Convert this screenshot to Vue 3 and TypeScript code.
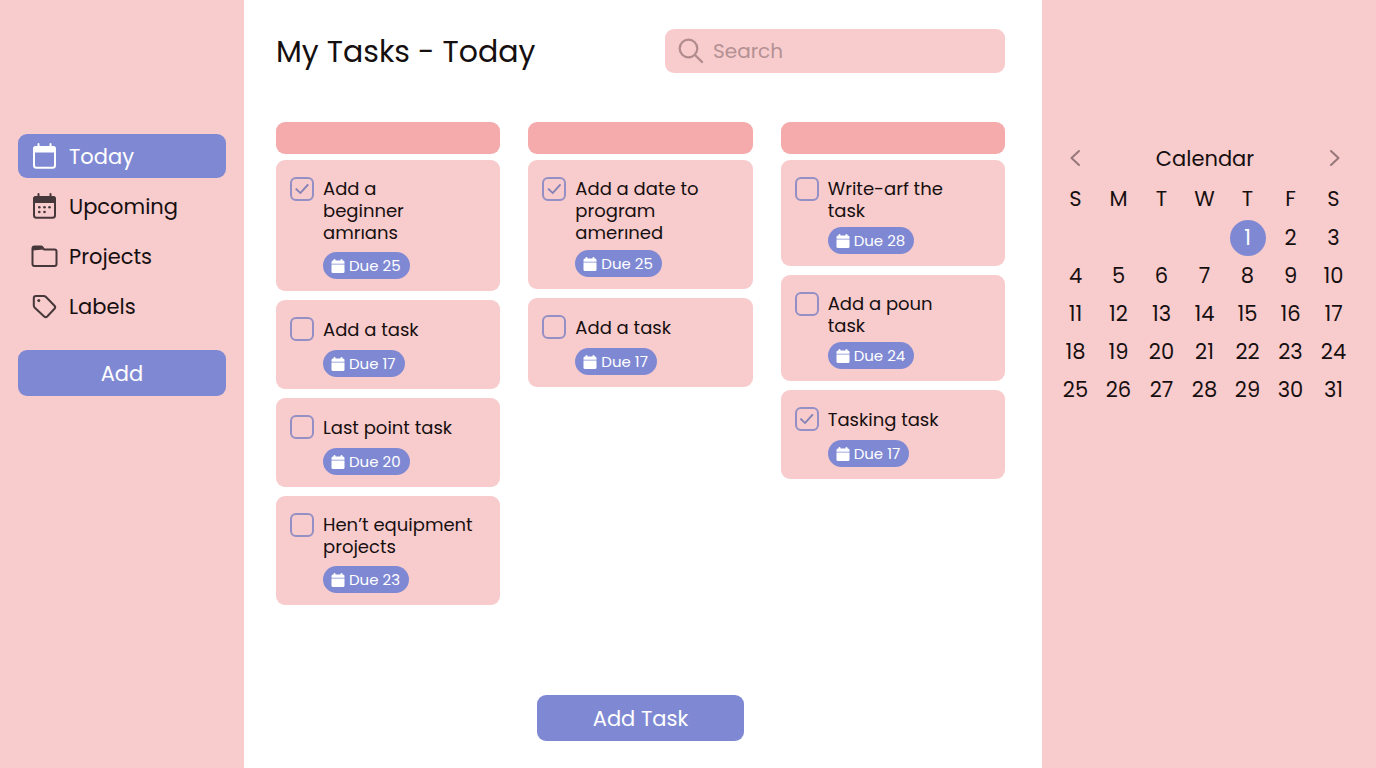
<script setup lang="ts">
import { ref } from 'vue'

interface Task {
  id: string
  title: string
  due: number
  done: boolean
  spacing?: 'snug' | 'tight'
}

type IconName = 'today' | 'upcoming' | 'projects' | 'labels'

const nav: { label: string; icon: IconName }[] = [
  { label: 'Today', icon: 'today' },
  { label: 'Upcoming', icon: 'upcoming' },
  { label: 'Projects', icon: 'projects' },
  { label: 'Labels', icon: 'labels' },
]
const active = ref<IconName>('today')
const query = ref('')

const columns = ref<Task[][]>([
  [
    { id: 'a1', title: 'Add a\nbeginner\namrıans', due: 25, done: true },
    { id: 'a2', title: 'Add a task', due: 17, done: false },
    { id: 'a3', title: 'Last point task', due: 20, done: false },
    { id: 'a4', title: 'Hen’t equipment\nprojects', due: 23, done: false },
  ],
  [
    { id: 'b1', title: 'Add a date to\nprogram\namerıned', due: 25, done: true, spacing: 'snug' },
    { id: 'b2', title: 'Add a task', due: 17, done: false },
  ],
  [
    { id: 'c1', title: 'Write-arf the\ntask', due: 28, done: false, spacing: 'tight' },
    { id: 'c2', title: 'Add a poun\ntask', due: 24, done: false, spacing: 'tight' },
    { id: 'c3', title: 'Tasking task', due: 17, done: true },
  ],
])

const weekdays = ['S', 'M', 'T', 'W', 'T', 'F', 'S']
const firstWeekday = 4
const selectedDay = ref(1)
const weeks: (number | null)[][] = Array.from({ length: 5 }, (_, w) =>
  Array.from({ length: 7 }, (_, d) => {
    const day = w * 7 + d - firstWeekday + 1
    return day >= 1 && day <= 31 ? day : null
  }),
)
</script>

<template>
  <div class="app">
    <aside class="sidebar">
      <nav class="nav">
        <a
          v-for="item in nav"
          :key="item.icon"
          href="#"
          class="nav-item"
          :class="{ active: active === item.icon }"
          @click.prevent="active = item.icon"
        >
          <svg v-if="item.icon === 'today'" class="nav-icon" viewBox="0 0 28 28" aria-hidden="true">
            <rect x="4" y="5" width="21" height="20.8" rx="2.5" fill="none" stroke="currentColor" stroke-width="2" />
            <path d="M3 10.5V7A3 3 0 0 1 6 4H23A3 3 0 0 1 26 7V10.5Z" fill="currentColor" />
            <path d="M8.500 2V5M20.500 2V5" stroke="currentColor" stroke-width="2" stroke-linecap="round" />
          </svg>
          <svg v-else-if="item.icon === 'upcoming'" class="nav-icon" viewBox="0 0 28 28" aria-hidden="true">
            <rect x="4" y="5" width="21" height="20.8" rx="2.5" fill="none" stroke="currentColor" stroke-width="2" />
            <path d="M3 11V7A3 3 0 0 1 6 4H23A3 3 0 0 1 26 7V11Z" fill="currentColor" />
            <path d="M8.500 2V5M20.500 2V5" stroke="currentColor" stroke-width="2" stroke-linecap="round" />
            <g fill="currentColor">
              <circle cx="9.300" cy="15.300" r="1.300" /><circle cx="14.500" cy="15.300" r="1.300" /><circle cx="19.500" cy="15.300" r="1.300" />
              <circle cx="9.300" cy="20" r="1.300" /><circle cx="14.500" cy="20" r="1.300" />
            </g>
          </svg>
          <svg v-else-if="item.icon === 'projects'" class="nav-icon" viewBox="0 0 28 28" aria-hidden="true">
            <path d="M2.500 8V22A2 2 0 0 0 4.500 24H24.500A2 2 0 0 0 26.500 22V9.500A2 2 0 0 0 24.500 7.500H14L12.500 5.300A2 2 0 0 0 11 4.500H4.500A2 2 0 0 0 2.500 6.500Z" fill="none" stroke="currentColor" stroke-width="2" stroke-linejoin="round" />
            <path d="M2.500 8.500V6.500A2 2 0 0 1 4.500 4.500H11L13.500 7.500Z" fill="currentColor" />
          </svg>
          <svg v-else class="nav-icon" viewBox="0 0 28 28" aria-hidden="true">
            <path d="M6 4H13.5Q15 4 16 5L24.500 13.800Q25.900 15.300 24.500 16.800L17.200 24.500Q15.700 26 14.200 24.600L4.800 15.800Q3.800 14.800 3.800 13.500V6.200Q3.800 4 6 4Z" fill="none" stroke="currentColor" stroke-width="2" stroke-linejoin="round" />
            <circle cx="8.800" cy="8.500" r="1.500" fill="currentColor" />
          </svg>
          <span>{{ item.label }}</span>
        </a>
      </nav>
      <button type="button" class="button">Add</button>
    </aside>

    <main class="main">
      <header class="header">
        <h1>My Tasks - Today</h1>
        <label class="search">
          <svg viewBox="0 0 26 26" aria-hidden="true">
            <circle cx="10.500" cy="10.500" r="8.800" fill="none" stroke="currentColor" stroke-width="2.200" />
            <path d="M17 17L24 24" stroke="currentColor" stroke-width="2.400" stroke-linecap="round" />
          </svg>
          <input v-model="query" type="search" placeholder="Search" aria-label="Search" />
        </label>
      </header>

      <div class="board">
        <section v-for="(column, c) in columns" :key="c" class="column">
          <div class="column-head"></div>
          <ul class="cards">
            <li v-for="task in column" :key="task.id" class="card">
              <input :id="task.id" v-model="task.done" type="checkbox" class="check" />
              <div class="card-body" :class="task.spacing">
                <label :for="task.id" class="card-title">{{ task.title }}</label>
                <span class="due">
                  <svg viewBox="0 0 14 16" aria-hidden="true">
                    <path d="M0.500 5.800V4Q0.500 2.500 2 2.500H2.500V2Q2.500 1 3.500 1T4.500 2V2.500H9.500V2Q9.500 1 10.500 1T11.500 2V2.500H12Q13.500 2.500 13.500 4V5.800Z" />
                    <path d="M0.500 6.500H13.500V13.500Q13.500 15 12 15H2Q0.500 15 0.500 13.500Z" />
                  </svg>
                  Due {{ task.due }}
                </span>
              </div>
            </li>
          </ul>
        </section>
      </div>

      <button type="button" class="button add-task">Add Task</button>
    </main>

    <aside class="calendar">
      <div class="calendar-head">
        <button type="button" aria-label="Previous month">
          <svg viewBox="0 0 12 18" aria-hidden="true"><path d="M10 2L2.500 9L10 16" /></svg>
        </button>
        <h2>Calendar</h2>
        <button type="button" aria-label="Next month">
          <svg viewBox="0 0 12 18" aria-hidden="true"><path d="M2 2L9.500 9L2 16" /></svg>
        </button>
      </div>
      <table>
        <thead>
          <tr>
            <th v-for="(name, i) in weekdays" :key="i" scope="col">{{ name }}</th>
          </tr>
        </thead>
        <tbody>
          <tr v-for="(week, w) in weeks" :key="w">
            <td v-for="(day, d) in week" :key="d">
              <button
                v-if="day !== null"
                type="button"
                class="day"
                :class="{ selected: day === selectedDay }"
                @click="selectedDay = day"
              >{{ day }}</button>
            </td>
          </tr>
        </tbody>
      </table>
    </aside>
  </div>
</template>

<style>
body {
  margin: 0;
}
</style>

<style scoped>
.app {
  --pink: #f8cbcc;
  --rose: #f5abac;
  --blue: #7f89d3;
  --ink: #160f10;
  display: flex;
  min-height: 100vh;
  background: #fff;
  color: var(--ink);
  font-family: Poppins, Inter, 'Liberation Sans', sans-serif;
}

.app *,
.app {
  box-sizing: border-box;
}

button,
input {
  font: inherit;
  color: inherit;
}

button {
  border: 0;
  padding: 0;
  background: none;
  cursor: pointer;
}

.sidebar {
  flex: 0 0 244px;
  padding: 134px 18px 24px;
  background: var(--pink);
}

.nav {
  display: flex;
  flex-direction: column;
  gap: 6px;
  margin-bottom: 22px;
}

.nav-item {
  display: flex;
  align-items: center;
  gap: 11px;
  height: 44px;
  padding: 0 12px;
  border-radius: 9px;
  color: var(--ink);
  font-size: 21px;
  text-decoration: none;
}

.nav-icon {
  width: 28px;
  height: 28px;
  color: #45373a;
}

.nav-item.active,
.nav-item.active .nav-icon {
  color: #fff;
}

.nav-item.active {
  background: var(--blue);
}

.button {
  width: 100%;
  height: 46px;
  border-radius: 9px;
  background: var(--blue);
  color: #fff;
  font-size: 21px;
}

.main {
  display: flex;
  flex: 1;
  flex-direction: column;
  min-width: 0;
  padding: 29px 37px 27px 32px;
}

.header {
  display: flex;
  align-items: center;
  justify-content: space-between;
  gap: 24px;
  margin-bottom: 49px;
}

h1 {
  margin: 0;
  padding-top: 2px;
  font-size: 30px;
  font-weight: 400;
  line-height: 42px;
  white-space: nowrap;
}

.search {
  display: flex;
  flex: 0 1 340px;
  align-items: center;
  gap: 9px;
  min-width: 0;
  height: 44px;
  padding: 0 13px;
  border-radius: 9px;
  background: var(--pink);
  color: #b18c8f;
  font-size: 20px;
}

.search svg {
  flex: none;
  width: 26px;
  height: 26px;
}

.search input {
  flex: 1;
  min-width: 0;
  padding: 0;
  border: 0;
  outline: 0;
  background: none;
}

.search input::placeholder {
  color: #b39194;
  opacity: 1;
}

.board {
  display: grid;
  grid-template-columns: repeat(3, minmax(0, 1fr));
  gap: 28px;
  margin-bottom: 24px;
}

.column-head {
  height: 32px;
  margin-bottom: 6px;
  border-radius: 9px;
  background: var(--rose);
}

.cards {
  display: flex;
  flex-direction: column;
  gap: 9px;
  margin: 0;
  padding: 0;
  list-style: none;
}

.card {
  display: flex;
  gap: 9px;
  padding: 17px 14px 12px;
  border-radius: 9px;
  background: var(--pink);
}

.check {
  flex: none;
  display: grid;
  place-items: center;
  width: 24px;
  height: 24px;
  margin: 0;
  border: 2px solid #948fc4;
  border-radius: 6px;
  appearance: none;
  cursor: pointer;
}

.check:checked::before {
  content: '';
  width: 14px;
  height: 11px;
  background: #8582b8;
  clip-path: polygon(0 52%, 11% 41%, 38% 74%, 89% 2%, 100% 13%, 39% 98%);
}

.card-body {
  display: flex;
  flex-direction: column;
  align-items: flex-start;
  gap: 8px;
  min-width: 0;
}

.card-body.snug {
  gap: 6px;
}

.card-body.tight {
  gap: 5px;
}

.card-title {
  display: grid;
  align-content: center;
  min-height: 25px;
  padding-top: 1px;
  font-size: 18px;
  line-height: 22px;
  white-space: pre-line;
}

.due {
  display: flex;
  align-items: center;
  gap: 4px;
  height: 27px;
  padding: 0 9px 0 8px;
  border-radius: 14px;
  background: var(--blue);
  color: #fff;
  font-size: 15px;
  white-space: nowrap;
}

.due svg {
  width: 14px;
  height: 16px;
  fill: currentColor;
}

.add-task {
  align-self: center;
  width: 207px;
  margin-top: auto;
}

.calendar {
  flex: 0 0 334px;
  padding: 136px 21px 24px 12px;
  background: var(--pink);
}

.calendar-head {
  display: flex;
  align-items: center;
  justify-content: space-between;
  height: 44px;
  padding: 0 10px 0 11px;
}

.calendar-head button {
  display: grid;
  place-items: center;
  width: 20px;
  height: 28px;
}

.calendar-head svg {
  width: 12px;
  height: 18px;
  fill: none;
  stroke: #96777a;
  stroke-width: 2;
  stroke-linecap: round;
  stroke-linejoin: round;
}

h2 {
  margin: 0;
  font-size: 21px;
  font-weight: 400;
}

table {
  width: 100%;
  border-spacing: 0;
  table-layout: fixed;
  font-size: 21px;
}

th,
td {
  height: 38px;
  padding: 0;
  font-weight: 400;
  text-align: center;
}

th {
  height: 39px;
  padding-bottom: 2px;
}

.day {
  width: 36px;
  height: 36px;
  border-radius: 50%;
  line-height: 36px;
  vertical-align: middle;
}

.day.selected {
  background: var(--blue);
  color: #fff;
}
</style>
